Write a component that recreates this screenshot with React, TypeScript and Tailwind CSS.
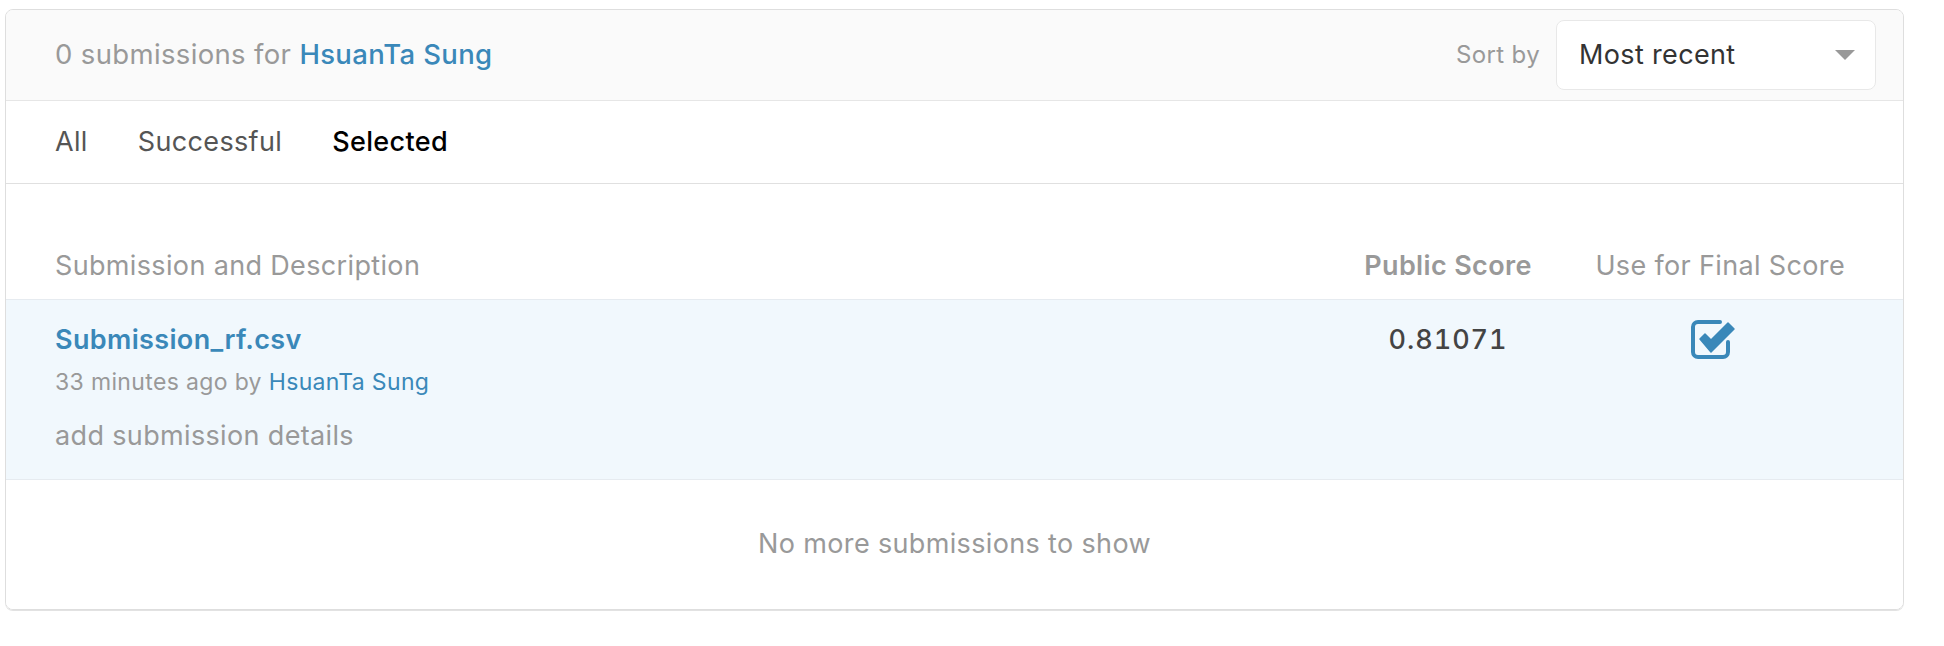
const font = { fontFamily: 'Inter, "Noto Sans", sans-serif' };

function CheckSquare() {
  return (
    <svg width="48" height="40" viewBox="0 0 48 40" className="text-[#3a88b9]">
      {/* box, open at the top right where the tick leaves it */}
      <path
        d="M30 2 H8 a5 5 0 0 0 -5 5 V32 a5 5 0 0 0 5 5 H33 a5 5 0 0 0 5 -5 V22"
        fill="none"
        stroke="currentColor"
        strokeWidth="4"
        strokeLinecap="round"
      />
      <path
        d="M10 19 L15 14 L21 20 L38 3 L44 9 L21 32 Z"
        fill="currentColor"
        strokeLinejoin="round"
        stroke="currentColor"
        strokeWidth="1.5"
      />
    </svg>
  );
}

const tabs = [
  { label: 'All', active: false },
  { label: 'Successful', active: false },
  { label: 'Selected', active: true },
];

export default function App() {
  return (
    <div className="min-h-screen bg-white pl-[5px] pt-[9px] tracking-[0.35px]" style={font}>
      <div className="w-[1899px] overflow-hidden rounded-[8px] border border-[#dedede] shadow-[0_1px_0_#e2e2e2]">
        {/* Header */}
        <div className="flex h-[91px] items-center justify-between border-b border-[#e6e6e6] bg-[#fafafa] pl-[49px] pr-[27px]">
          <div className="text-[27.5px] text-[#999]">
            0 submissions for <span className="font-medium text-[#3a88b9]">HsuanTa Sung</span>
          </div>
          <div className="flex items-center gap-[16px]">
            <span className="text-[24px] text-[#999]">Sort by</span>
            <div className="flex h-[70px] w-[320px] items-center justify-between rounded-[8px] border border-[#e8e8e8] bg-white pl-[22px] pr-[20px]">
              <span className="text-[27px] text-[#333]">Most recent</span>
              <svg width="20" height="10" viewBox="0 0 20 10">
                <path d="M0 0 H20 L10 10 Z" fill="#999" />
              </svg>
            </div>
          </div>
        </div>

        {/* Tabs */}
        <div className="flex h-[83px] items-center gap-[50px] border-b border-[#e0e0e0] bg-white pl-[49px]">
          {tabs.map((t) => (
            <span
              key={t.label}
              className={`text-[27px] ${t.active ? 'font-medium text-black' : 'text-[#555]'}`}
            >
              {t.label}
            </span>
          ))}
        </div>

        {/* Table head */}
        <div className="flex h-[116px] items-end border-b border-[#e6ebf0] bg-white pb-[13px] pl-[49px] pr-[58px]">
          <span className="flex-1 text-[27px] text-[#999]">Submission and Description</span>
          <span className="w-[180px] text-center text-[27px] font-semibold text-[#999]">Public Score</span>
          <span className="ml-[55px] w-[252px] text-right text-[27px] text-[#999]">Use for Final Score</span>
        </div>

        {/* Row */}
        <div className="flex h-[180px] border-b border-[#e6ebf0] bg-[#f1f8fd] pl-[49px] pr-[58px] pt-[22px]">
          <div className="flex flex-1 flex-col">
            <span className="text-[27px] font-semibold leading-[36px] text-[#3a88b9]">Submission_rf.csv</span>
            <span className="mt-[9px] text-[23px] leading-[30px] text-[#999]">
              33 minutes ago by <span className="text-[#3a88b9]">HsuanTa Sung</span>
            </span>
            <span className="mt-[22px] text-[27px] leading-[34px] text-[#999]">add submission details</span>
          </div>
          <span className="w-[180px] text-center text-[27px] font-medium leading-[36px] tracking-[1px] text-[#444] tabular-nums">
            0.81071
          </span>
          <div className="ml-[55px] flex w-[252px] justify-center">
            <div className="-mt-[2px] mr-[10px]">
              <CheckSquare />
            </div>
          </div>
        </div>

        {/* Footer */}
        <div className="flex h-[129px] items-center justify-center bg-white">
          <span className="text-[27px] text-[#999]">No more submissions to show</span>
        </div>
      </div>
    </div>
  );
}
